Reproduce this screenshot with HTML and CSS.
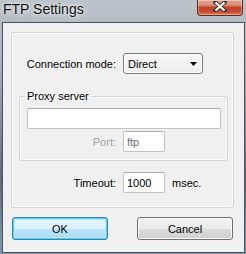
FILE: index.html
```html
<!DOCTYPE html>
<html lang="en">
<head>
    <meta charset="UTF-8">
    <title>FTP Settings</title>
    <link rel="stylesheet" href="styles.css">
</head>
<body>
    <div class="window">
        <div class="titlebar">
            <span class="title">FTP Settings</span>
            <button class="close-btn" aria-label="Close">
                <svg width="14" height="11" viewBox="0 0 14 11">
                    <path d="M2 1 L12 10 M12 1 L2 10" stroke="#3b3b3b" stroke-width="4" stroke-linecap="square"/>
                    <path d="M2.5 1.5 L11.5 9.5 M11.5 1.5 L2.5 9.5" stroke="#ffffff" stroke-width="2"/>
                </svg>
            </button>
        </div>

        <div class="client">
            <div class="panel">
                <div class="row">
                    <label class="row-label">Connection mode:</label>
                    <div class="combo">
                        <span>Direct</span>
                        <svg class="combo-arrow" width="7" height="4" viewBox="0 0 7 4">
                            <path d="M0 0 H7 L3.5 4 Z" fill="#000"/>
                        </svg>
                    </div>
                </div>

                <fieldset class="proxy">
                    <legend>Proxy server</legend>
                    <input class="text-input proxy-host" type="text">
                    <div class="row port-row">
                        <label class="row-label port-label">Port:</label>
                        <input class="text-input short dim" type="text" value="ftp">
                    </div>
                </fieldset>

                <div class="row timeout-row">
                    <label class="row-label">Timeout:</label>
                    <input class="text-input short" type="text" value="1000">
                    <span class="unit">msec.</span>
                </div>
            </div>

            <div class="buttons">
                <button class="btn btn-default">OK</button>
                <button class="btn">Cancel</button>
            </div>
        </div>
    </div>
</body>
</html>
```

FILE: styles.css
```css
* {
    margin: 0;
    padding: 0;
    box-sizing: border-box;
}

body {
    font-family: 'Liberation Sans', Arial, sans-serif;
    font-size: 11px;
    color: #000;
    width: 246px;
    height: 254px;
    overflow: hidden;
}

.window {
    width: 246px;
    height: 254px;
    display: flex;
    flex-direction: column;
    padding: 0 1px 1px 2px;
    background: linear-gradient(180deg, #bcc3c9 0%, #a9b2ba 25%, #5f6a75 70%, #7d99b5 100%);
}

.titlebar {
    height: 22px;
    display: flex;
    align-items: flex-start;
}

.title {
    margin: 1px 0 0 1px;
    font-size: 14px;
    color: #111;
    text-shadow: 0 0 6px rgba(255, 255, 255, 0.9), 0 0 3px rgba(255, 255, 255, 0.8);
}

.close-btn {
    margin-left: auto;
    margin-right: 2px;
    width: 46px;
    height: 16px;
    border: 1px solid #5a2a22;
    border-top: none;
    border-radius: 0 0 4px 4px;
    background: linear-gradient(180deg, #e6a795 0%, #d88a74 35%, #c0432c 50%, #c54a30 75%, #de7a52 100%);
    box-shadow: inset 0 0 0 1px rgba(255, 255, 255, 0.35);
    display: flex;
    align-items: center;
    justify-content: center;
    padding-bottom: 2px;
}

.client {
    flex: 1;
    border: 1px solid #48525c;
    background: #f0f0f0;
}

.panel {
    margin: 9px 10px 0 8px;
    padding: 20px 5px 14px 7px;
    border: 1px solid #d5d5d5;
    border-radius: 3px;
    box-shadow: inset 0 0 0 1px #fbfbfb;
}

.row {
    display: flex;
    align-items: center;
    gap: 7px;
    height: 21px;
}

.row-label {
    width: 97px;
    text-align: right;
}

.combo {
    width: 80px;
    height: 21px;
    display: flex;
    align-items: center;
    padding: 0 3px 0 4px;
    border: 1px solid #7a7a7a;
    border-radius: 3px;
    background: linear-gradient(180deg, #f7f7f7 0%, #ededed 100%);
    box-shadow: inset 0 0 0 1px #fcfcfc;
}

.combo-arrow {
    margin-left: auto;
    margin-right: 2px;
}

.proxy {
    margin-top: 16px;
    padding: 0 6px 8px 7px;
    border: 1px solid #d5d5d5;
    border-radius: 3px;
    box-shadow: inset 0 0 0 1px #fbfbfb;
}

.proxy legend {
    margin-left: -2px;
    padding: 0 2px;
    line-height: 13px;
}

.text-input {
    display: block;
    height: 21px;
    padding: 0 3px;
    border: 1px solid #c2c2c2;
    border-top-color: #ababab;
    border-radius: 2px;
    background: #fff;
    font-family: inherit;
    font-size: 11px;
    color: #000;
    outline: none;
}

.proxy-host {
    width: 100%;
    margin-top: 5px;
}

.port-row {
    margin-top: 2px;
}

.port-label {
    width: 89px;
    color: #a0a0a0;
}

.short {
    width: 42px;
}

.dim {
    color: #6d6d6d;
}

.timeout-row {
    margin-top: 11px;
}

.buttons {
    display: flex;
    justify-content: space-between;
    margin: 9px 11px 0 9px;
}

.btn {
    width: 96px;
    height: 23px;
    font-family: inherit;
    font-size: 11px;
    color: #000;
    border: 1px solid #707070;
    border-radius: 3px;
    background: linear-gradient(180deg, #f2f2f2 0%, #ebebeb 50%, #dddddd 50%, #cfcfcf 100%);
    box-shadow: inset 0 0 0 1px #fcfcfc;
}

.btn-default {
    border-color: #3c7fb1;
    background: linear-gradient(180deg, #eaf6fd 0%, #d9f0fc 50%, #bee6fd 50%, #a7d9f5 100%);
    box-shadow: inset 0 0 0 1px #48d0f6, inset 0 0 0 2px #c3ecfb;
}
```
